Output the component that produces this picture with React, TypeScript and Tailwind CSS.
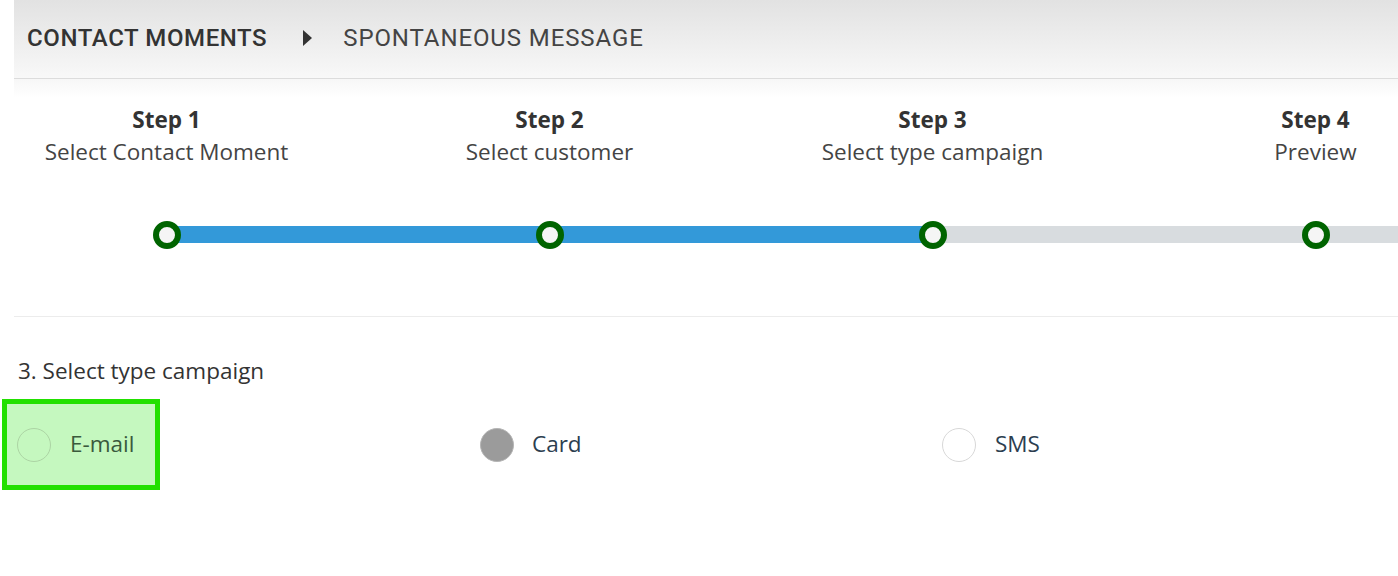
import React from "react";

const steps = [
  { title: "Step 1", sub: "Select Contact Moment", done: true },
  { title: "Step 2", sub: "Select customer", done: true },
  { title: "Step 3", sub: "Select type campaign", done: false },
  { title: "Step 4", sub: "Preview", done: false },
];

export default function App() {
  return (
    <div className="w-[1398px] h-[576px] bg-white overflow-hidden" style={{ fontFamily: '"Open Sans", sans-serif' }}>
      {/* Header */}
      <div className="ml-[14px] h-[79px] border-b border-[#dcdcdc] bg-linear-to-b from-[#e2e2e2] to-[#f8f8f8] flex items-center pl-[13px] pb-[2px]">
        <span className="text-[24px] font-medium text-[#333] tracking-[0.6px]" style={{ fontFamily: "Roboto, sans-serif" }}>
          CONTACT MOMENTS
        </span>
        <span className="ml-[36px] mr-[31px] w-0 h-0 border-y-[8px] border-y-transparent border-l-[9px] border-l-[#333]" />
        <span className="text-[24px] font-normal text-[#444] tracking-[0.9px]" style={{ fontFamily: "Roboto, sans-serif" }}>
          SPONTANEOUS MESSAGE
        </span>
      </div>

      {/* Steps */}
      <div className="ml-[14px] h-[238px] border-b border-[#ececec] bg-linear-to-b from-[#f7f7f7] to-white to-[8%] overflow-hidden">
        <div className="flex -ml-[39px] pt-[25px]">
          {steps.map((s, i) => (
            <div key={i} className="w-[383px] shrink-0 flex flex-col items-center">
              <div className="text-[22.5px] leading-[32px] font-bold text-[#333]">{s.title}</div>
              <div className="text-[22.5px] leading-[32px] text-[#444]">{s.sub}</div>
              <div className="relative w-full h-[28px] mt-[53px]">
                <div
                  className={
                    "absolute left-1/2 right-0 top-[5px] h-[17px] " +
                    (s.done ? "bg-[#3399d9]" : "bg-[#d8dcdf]")
                  }
                />
                {i > 0 && (
                  <div
                    className={
                      "absolute left-0 right-1/2 top-[5px] h-[17px] " +
                      (steps[i - 1].done ? "bg-[#3399d9]" : "bg-[#d8dcdf]")
                    }
                  />
                )}
                <div className="absolute left-1/2 top-0 -translate-x-1/2 w-[28px] h-[28px] rounded-full border-[6px] border-[#006400] bg-[#f5f5f5]" />
              </div>
            </div>
          ))}
        </div>
      </div>

      {/* Section */}
      <div className="pt-[38px]">
        <div className="pl-[18px] text-[22.5px] leading-[32px] text-[#333]">3. Select type campaign</div>
        <div className="flex pl-[2px] mt-[12px]">
          <div className="w-[462px] shrink-0">
            <div className="inline-flex items-center h-[91px] border-[5px] border-[#22e000] bg-[#c5f8bf] pl-[10px] pr-[21px]">
              <span className="w-[34px] h-[34px] rounded-full border border-[#acd4a4] bg-[#c5f8bf]" />
              <span className="ml-[19px] text-[22.5px] text-[#3a5a3c] pb-[2px]">E-mail</span>
            </div>
          </div>
          <div className="w-[462px] shrink-0">
            <div className="inline-flex items-center h-[91px] border-[5px] border-transparent pl-[11px] pr-[21px]">
              <span className="w-[34px] h-[34px] rounded-full border border-[#b5b5b5] bg-[#9b9b9b]" />
              <span className="ml-[18px] text-[22.5px] text-[#2c3e50] pb-[2px]">Card</span>
            </div>
          </div>
          <div className="w-[462px] shrink-0">
            <div className="inline-flex items-center h-[91px] border-[5px] border-transparent pl-[11px] pr-[21px]">
              <span className="w-[34px] h-[34px] rounded-full border border-[#d8d8d8] bg-white" />
              <span className="ml-[19px] text-[22.5px] text-[#2c3e50] pb-[2px]">SMS</span>
            </div>
          </div>
        </div>
      </div>
    </div>
  );
}
